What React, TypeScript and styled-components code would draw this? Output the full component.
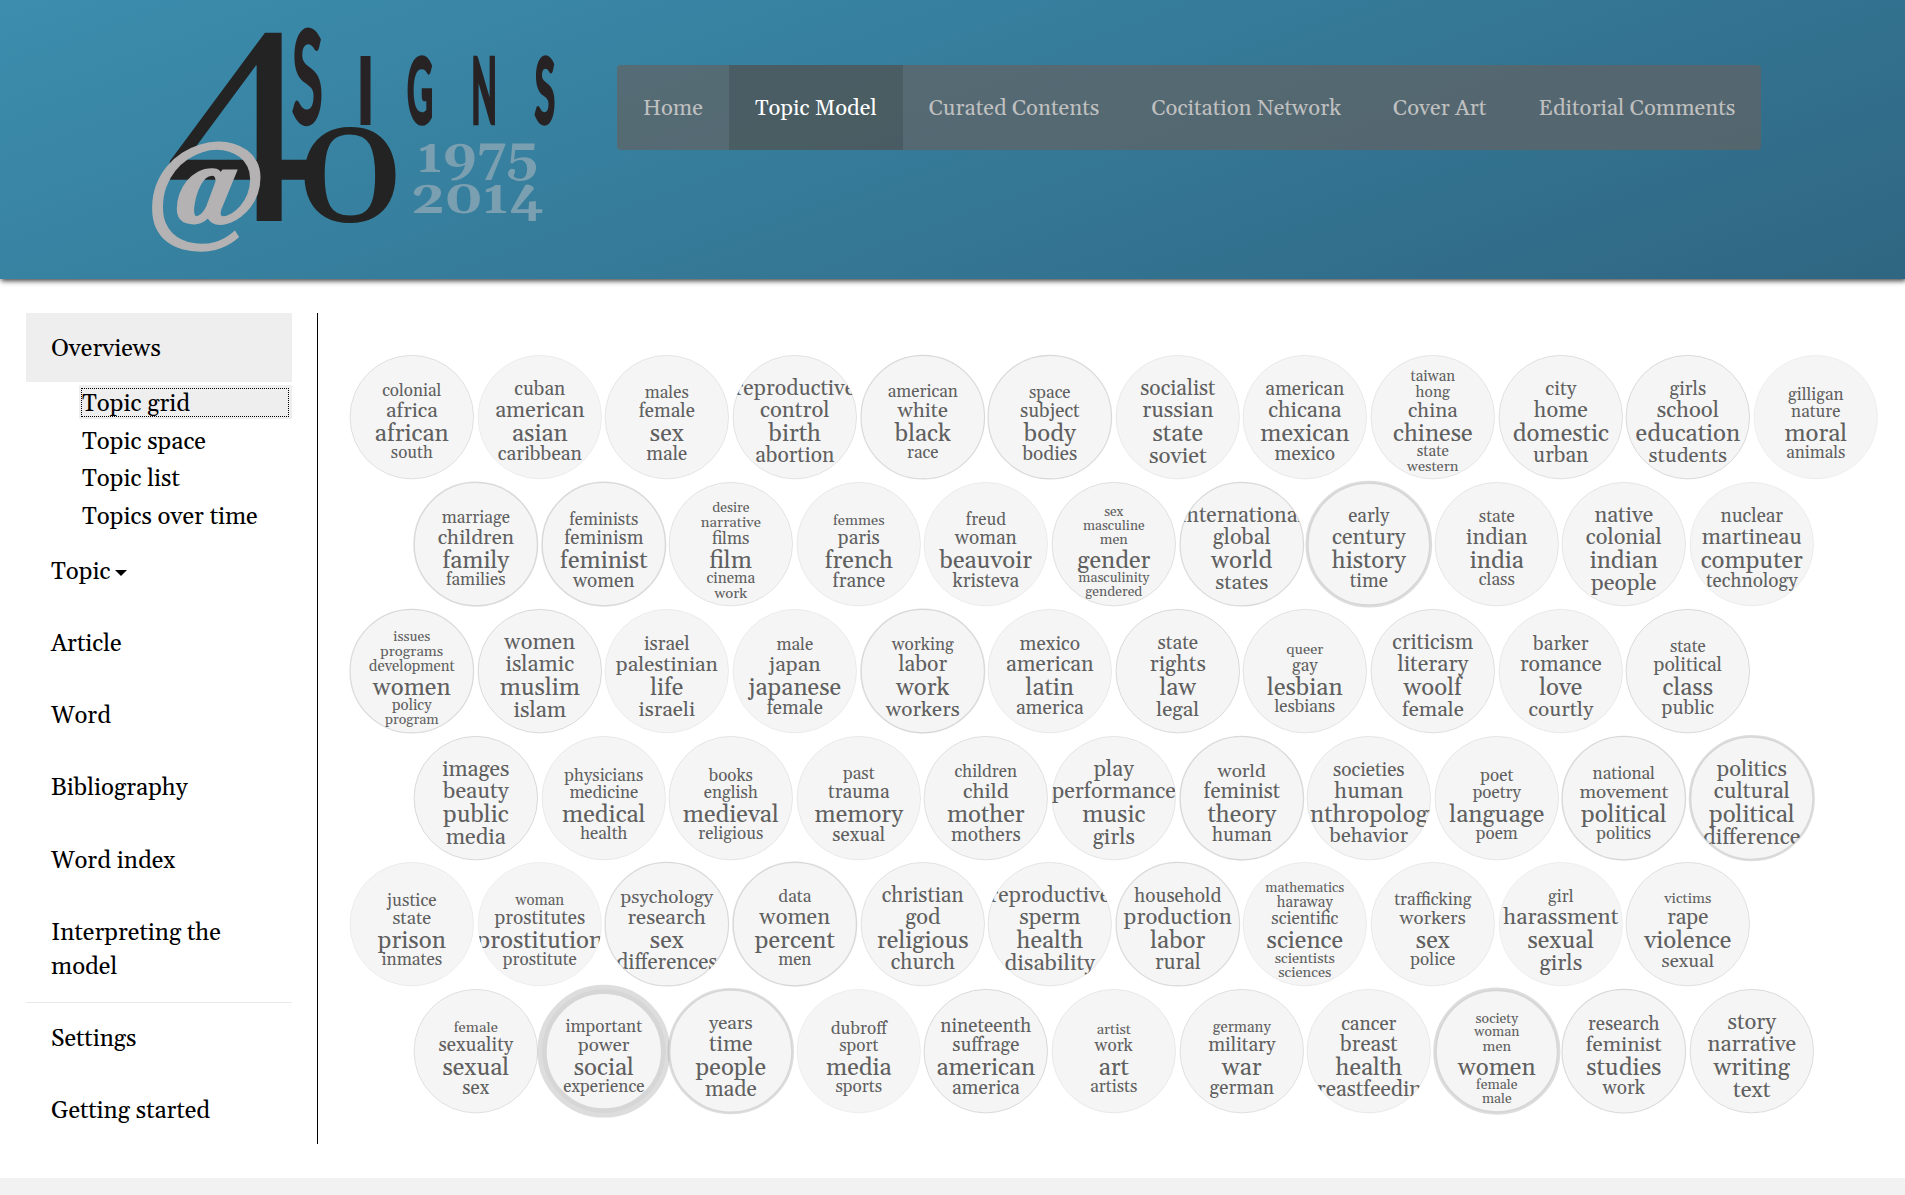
import React from 'react';
import styled, { createGlobalStyle, css } from 'styled-components';

const SERIF = `Georgia, Gelasio, 'Liberation Serif', serif`;

const GlobalStyle = createGlobalStyle`
  * { box-sizing: border-box; }
  body { margin: 0; background: #f2f2f2; font-family: ${SERIF}; color: #000; overflow: hidden; }
  ul { list-style: none; margin: 0; padding: 0; }
`;

const Page = styled.div`
  display: flex;
  flex-direction: column;
  height: 1178px;
  background: #fff;
`;

const Header = styled.header`
  display: flex;
  align-items: flex-start;
  flex: 0 0 279px;
  padding: 0 144px 0 130px;
  background: linear-gradient(160deg, #3c8dae 0%, #37809f 35%, #2f6682 100%);
  box-shadow: 1px 2px 5px #444;
`;

const Logo = styled.svg`
  flex: 0 0 487px;
  height: 279px;
`;

const Nav = styled.nav`
  display: flex;
  height: 85px;
  margin-top: 65px;
  border-radius: 4px;
  overflow: hidden;
  background: rgba(98, 98, 98, 0.7);
`;

const NavItem = styled.a<{ $active?: boolean }>`
  display: flex;
  align-items: center;
  padding: 3px 26px 0;
  font-size: 22px;
  line-height: 31px;
  letter-spacing: 0.02px;
  white-space: nowrap;
  color: ${(p) => (p.$active ? '#fff' : '#c0c0c0')};
  background: ${(p) => (p.$active ? 'rgba(64, 80, 84, 0.5)' : 'transparent')};
`;

const Body = styled.div`
  display: flex;
  flex: 1;
  padding: 34px 0 34px 26px;
`;

const Sidebar = styled.aside`
  flex: 0 0 292px;
  height: 831px;
  padding-right: 25px;
  border-right: 1px solid #000;
`;

const SideItem = styled.a<{ $active?: boolean }>`
  display: block;
  margin-bottom: 3.1px;
  padding: 19.4px 25px 15.4px;
  font-size: 24px;
  line-height: 34.28px;
  background: ${(p) => (p.$active ? '#eee' : 'transparent')};
`;

const Caret = styled.span`
  display: inline-block;
  margin-left: 5px;
  vertical-align: middle;
  border-top: 6px solid #000;
  border-left: 6px solid transparent;
  border-right: 6px solid transparent;
`;

const SubList = styled.ul`
  display: flex;
  flex-direction: column;
  gap: 3.3px;
  margin: 0 0 3.7px 53px;
`;

const SubItem = styled.li<{ $active?: boolean }>`
  height: 34.2px;
  padding: 3px 3px 2px 2px;
  font-size: 24px;
  ${(p) => p.$active && css`background: #eee;`}
`;

const SubLink = styled.a<{ $active?: boolean }>`
  display: block;
  height: 29px;
  line-height: 30px;
  border: 1px dotted ${(p) => (p.$active ? '#000' : 'transparent')};
`;

const Divider = styled.div`
  height: 1px;
  margin: -0.5px 0 -1px;
  background: #e9e9e9;
`;

const Grid = styled.main`
  display: flex;
  flex-direction: column;
  padding: 40.9px 0 0 30.2px;
`;

const Row = styled.div<{ $shift: boolean }>`
  display: flex;
  flex: 0 0 126.88px;
  padding-left: ${(p) => (p.$shift ? 63.8 : 0)}px;
`;

const Bubble = styled.svg`
  flex: 0 0 127.6px;
  height: 126.9px;
  overflow: visible;
`;

const Disc = styled.circle`
  fill: #f5f5f5;
  stroke: #999;
  stroke-opacity: 0.33;
`;

const Word = styled.text`
  font-family: ${SERIF};
  fill: #606060;
  text-anchor: middle;
`;

type Sized = [string, number];
/* [words above, nearest first], main word, [words below], ring width */
type Topic = [Sized[], string, Sized[], number];

const rows: Topic[][] = [
  [
    [[['africa', 20.8], ['colonial', 17]], 'african', [['south', 17]], 0.8],
    [[['american', 21.7], ['cuban', 19]], 'asian', [['caribbean', 19.3]], 0.4],
    [[['female', 19], ['males', 17]], 'sex', [['male', 19]], 0.6],
    [[['control', 22], ['reproductive', 21.4]], 'birth', [['abortion', 21]], 0.7],
    [[['white', 20.5], ['american', 17]], 'black', [['race', 17]], 1.2],
    [[['subject', 19], ['space', 17]], 'body', [['bodies', 19]], 1.2],
    [[['russian', 22], ['socialist', 21]], 'state', [['soviet', 22.3]], 0.5],
    [[['chicana', 21.7], ['american', 19.2]], 'mexican', [['mexico', 19.2]], 0.5],
    [[['china', 20.5], ['hong', 15.5], ['taiwan', 15]], 'chinese', [['state', 15.2], ['western', 14.8]], 0.6],
    [[['home', 21.8], ['city', 19.5]], 'domestic', [['urban', 21]], 0.8],
    [[['school', 22], ['girls', 19]], 'education', [['students', 20.8]], 1],
    [[['nature', 17], ['gilligan', 17]], 'moral', [['animals', 17]], 0.3],
  ],
  [
    [[['children', 20.8], ['marriage', 17.1]], 'family', [['families', 17.1]], 1.5],
    [[['feminism', 19], ['feminists', 17]], 'feminist', [['women', 19]], 1.5],
    [[['films', 17.1], ['narrative', 14.9], ['desire', 13.9]], 'film', [['cinema', 15.2], ['work', 14.8]], 0.7],
    [[['paris', 19], ['femmes', 14.8]], 'french', [['france', 19]], 0.5],
    [[['woman', 19], ['freud', 17]], 'beauvoir', [['kristeva', 19]], 0.4],
    [[['men', 14.4], ['masculine', 13.7], ['sex', 13.6]], 'gender', [['masculinity', 13.8], ['gendered', 13.9]], 0.8],
    [[['global', 21.6], ['international', 21.4]], 'world', [['states', 20.9]], 1.2],
    [[['century', 22], ['early', 19]], 'history', [['time', 19.1]], 3.2],
    [[['indian', 21.6], ['state', 17.1]], 'india', [['class', 17.1]], 0.6],
    [[['colonial', 21.8], ['native', 21.7]], 'indian', [['people', 22.4]], 0.6],
    [[['martineau', 21.8], ['nuclear', 19]], 'computer', [['technology', 19]], 0.4],
  ],
  [
    [[['development', 15], ['programs', 14.8], ['issues', 14]], 'women', [['policy', 15], ['program', 14.1]], 1.2],
    [[['islamic', 21.8], ['women', 21.8]], 'muslim', [['islam', 22]], 1],
    [[['palestinian', 20.9], ['israel', 19]], 'life', [['israeli', 20.9]], 0.4],
    [[['japan', 20.9], ['male', 17.1]], 'japanese', [['female', 19]], 0.4],
    [[['labor', 21.2], ['working', 17.1]], 'work', [['workers', 20.8]], 1.5],
    [[['american', 21.3], ['mexico', 19.2]], 'latin', [['america', 19.2]], 0.5],
    [[['rights', 21.8], ['state', 19.2]], 'law', [['legal', 20.8]], 1],
    [[['gay', 17], ['queer', 14.8]], 'lesbian', [['lesbians', 17]], 0.7],
    [[['literary', 22], ['criticism', 21]], 'woolf', [['female', 20.9]], 0.8],
    [[['romance', 21.2], ['barker', 19.1]], 'love', [['courtly', 20.9]], 0.5],
    [[['political', 19.2], ['state', 17]], 'class', [['public', 19.2]], 1],
  ],
  [
    [[['beauty', 22.2], ['images', 21.7]], 'public', [['media', 22]], 1],
    [[['medicine', 17], ['physicians', 17]], 'medical', [['health', 17]], 0.5],
    [[['english', 17], ['books', 17]], 'medieval', [['religious', 17]], 0.6],
    [[['trauma', 19.1], ['past', 17.1]], 'memory', [['sexual', 19]], 0.5],
    [[['child', 20.9], ['children', 17]], 'mother', [['mothers', 19]], 0.8],
    [[['performance', 22], ['play', 21.6]], 'music', [['girls', 21.9]], 0.6],
    [[['feminist', 21], ['world', 18.9]], 'theory', [['human', 19.1]], 1.4],
    [[['human', 22], ['societies', 19.1]], 'anthropology', [['behavior', 20.3]], 0.6],
    [[['poetry', 17], ['poet', 17]], 'language', [['poem', 17]], 0.6],
    [[['movement', 18.9], ['national', 17.1]], 'political', [['politics', 17.1]], 1.4],
    [[['cultural', 22.2], ['politics', 21.8]], 'political', [['difference', 22.2]], 2.6],
  ],
  [
    [[['state', 18.4], ['justice', 17.2]], 'prison', [['inmates', 17.2]], 0.4],
    [[['prostitutes', 19], ['woman', 15]], 'prostitution', [['prostitute', 17.1]], 0.3],
    [[['research', 20.9], ['psychology', 18.9]], 'sex', [['differences', 21]], 1.2],
    [[['women', 21.8], ['data', 17.1]], 'percent', [['men', 17]], 1.5],
    [[['god', 21.8], ['christian', 21]], 'religious', [['church', 21]], 0.7],
    [[['sperm', 22], ['reproductive', 21.4]], 'health', [['disability', 22.2]], 0.6],
    [[['production', 22.1], ['household', 19]], 'labor', [['rural', 21]], 1.2],
    [[['scientific', 17.1], ['haraway', 15], ['mathematics', 13.9]], 'science', [['scientists', 14.7], ['sciences', 14.7]], 0.4],
    [[['workers', 18.6], ['trafficking', 17.1]], 'sex', [['police', 17.1]], 0.5],
    [[['harassment', 22.3], ['girl', 17]], 'sexual', [['girls', 22.2]], 0.3],
    [[['rape', 21], ['victims', 14.7]], 'violence', [['sexual', 18.9]], 0.8],
  ],
  [
    [[['sexuality', 19.1], ['female', 14.9]], 'sexual', [['sex', 19]], 0.8],
    [[['power', 18.8], ['important', 17.1]], 'social', [['experience', 17.1]], 9.3],
    [[['time', 21.8], ['years', 18.9]], 'people', [['made', 21.2]], 2.8],
    [[['sport', 17.1], ['dubroff', 17.1]], 'media', [['sports', 17.1]], 0.3],
    [[['suffrage', 19], ['nineteenth', 19]], 'american', [['america', 19.2]], 1],
    [[['work', 17.1], ['artist', 14.7]], 'art', [['artists', 17.1]], 0.5],
    [[['military', 19.2], ['germany', 15]], 'war', [['german', 19.1]], 0.8],
    [[['breast', 21], ['cancer', 19.1]], 'health', [['breastfeeding', 21.3]], 0.5],
    [[['men', 14.6], ['woman', 13.9], ['society', 14]], 'women', [['female', 14], ['male', 13.8]], 3.6],
    [[['feminist', 20.9], ['research', 19.1]], 'studies', [['work', 19]], 1.1],
    [[['narrative', 22], ['story', 22]], 'writing', [['text', 22.4]], 0.9],
  ],
];

const RADIUS = 61.8;
const MAIN_SIZE = 24;

function TopicBubble({ topic, id }: { topic: Topic; id: string }) {
  const [above, main, below, ring] = topic;
  let up = 0;
  let down = MAIN_SIZE;
  const words: { text: string; size: number; y: number }[] = [];
  above.forEach(([text, size]) => {
    words.push({ text, size, y: Math.round(up) });
    up -= size;
  });
  words.push({ text: main, size: MAIN_SIZE, y: MAIN_SIZE });
  below.forEach(([text, size]) => {
    down += size;
    words.push({ text, size, y: Math.round(down) });
  });
  return (
    <Bubble viewBox="-63.8 -63.45 127.6 126.9">
      <clipPath id={id}>
        <circle r={RADIUS} />
      </clipPath>
      <Disc r={RADIUS} cy={-0.3} strokeWidth={ring} />
      <g clipPath={`url(#${id})`}>
        {words.map((w) => (
          <Word key={w.text} y={w.y - 0.1} fontSize={w.size}>
            {w.text}
          </Word>
        ))}
      </g>
    </Bubble>
  );
}

const NumeralText = styled.text`
  font-family: ${SERIF};
`;

const FourText = styled.text`
  font-family: 'Liberation Serif', serif;
`;

const AtText = styled.text`
  font-family: ${SERIF};
  font-weight: 700;
  font-style: italic;
  fill: #b4b2b3;
  stroke: #b4b2b3;
  stroke-width: 1.6px;
`;

const YearText = styled.text`
  font-family: ${SERIF};
  font-weight: 700;
  font-size: 49px;
  fill: #7a9fb0;
`;

const SignsLetter = styled.text`
  font-family: Lato, sans-serif;
  text-anchor: middle;
  fill: #272324;
  stroke: #272324;
  stroke-width: 5px;
  vector-effect: non-scaling-stroke;
`;

const signs: { char: string; x: number; size: number; squeeze: number }[] = [
  { char: 'S', x: 307.5, size: 127, squeeze: 0.44 },
  { char: 'I', x: 365.5, size: 87, squeeze: 0.7 },
  { char: 'G', x: 420, size: 87, squeeze: 0.4 },
  { char: 'N', x: 484, size: 87, squeeze: 0.38 },
  { char: 'S', x: 545, size: 87, squeeze: 0.42 },
];

function SignsLogo() {
  return (
    <Logo viewBox="130 0 487 279">
      <g fill="#222322">
        <FourText transform="translate(164 221) scale(1.04 1)" fontSize="286">4</FourText>
        <NumeralText transform="translate(291 221) scale(1.2 1)" fontSize="160">0</NumeralText>
      </g>
      {signs.map((s, i) => (
        <SignsLetter key={i} transform={`translate(${s.x} 122) scale(${s.squeeze} 1)`} fontSize={s.size}>
          {s.char}
        </SignsLetter>
      ))}
      <AtText x="144.5" y="231" fontSize="124">@</AtText>
      <YearText x="417" y="172" textLength="121" lengthAdjust="spacingAndGlyphs">1975</YearText>
      <YearText x="411" y="213" textLength="133" lengthAdjust="spacingAndGlyphs">2014</YearText>
    </Logo>
  );
}

const navItems = ['Home', 'Topic Model', 'Curated Contents', 'Cocitation Network', 'Cover Art', 'Editorial Comments'];
const overviews = ['Topic grid', 'Topic space', 'Topic list', 'Topics over time'];
const sections = ['Article', 'Word', 'Bibliography', 'Word index', 'Interpreting the model'];

export default function App() {
  return (
    <>
      <GlobalStyle />
      <Page>
        <Header>
          <SignsLogo />
          <Nav>
            {navItems.map((n) => (
              <NavItem key={n} $active={n === 'Topic Model'}>{n}</NavItem>
            ))}
          </Nav>
        </Header>
        <Body>
          <Sidebar>
            <SideItem $active>Overviews</SideItem>
            <SubList>
              {overviews.map((o, i) => (
                <SubItem key={o} $active={i === 0}>
                  <SubLink $active={i === 0}>{o}</SubLink>
                </SubItem>
              ))}
            </SubList>
            <SideItem>Topic<Caret /></SideItem>
            {sections.map((s) => (
              <SideItem key={s}>{s}</SideItem>
            ))}
            <Divider />
            <SideItem>Settings</SideItem>
            <SideItem>Getting started</SideItem>
          </Sidebar>
          <Grid>
            {rows.map((row, r) => (
              <Row key={r} $shift={r % 2 === 1}>
                {row.map((t, c) => (
                  <TopicBubble key={c} id={`disc-${r}-${c}`} topic={t} />
                ))}
              </Row>
            ))}
          </Grid>
        </Body>
      </Page>
    </>
  );
}
